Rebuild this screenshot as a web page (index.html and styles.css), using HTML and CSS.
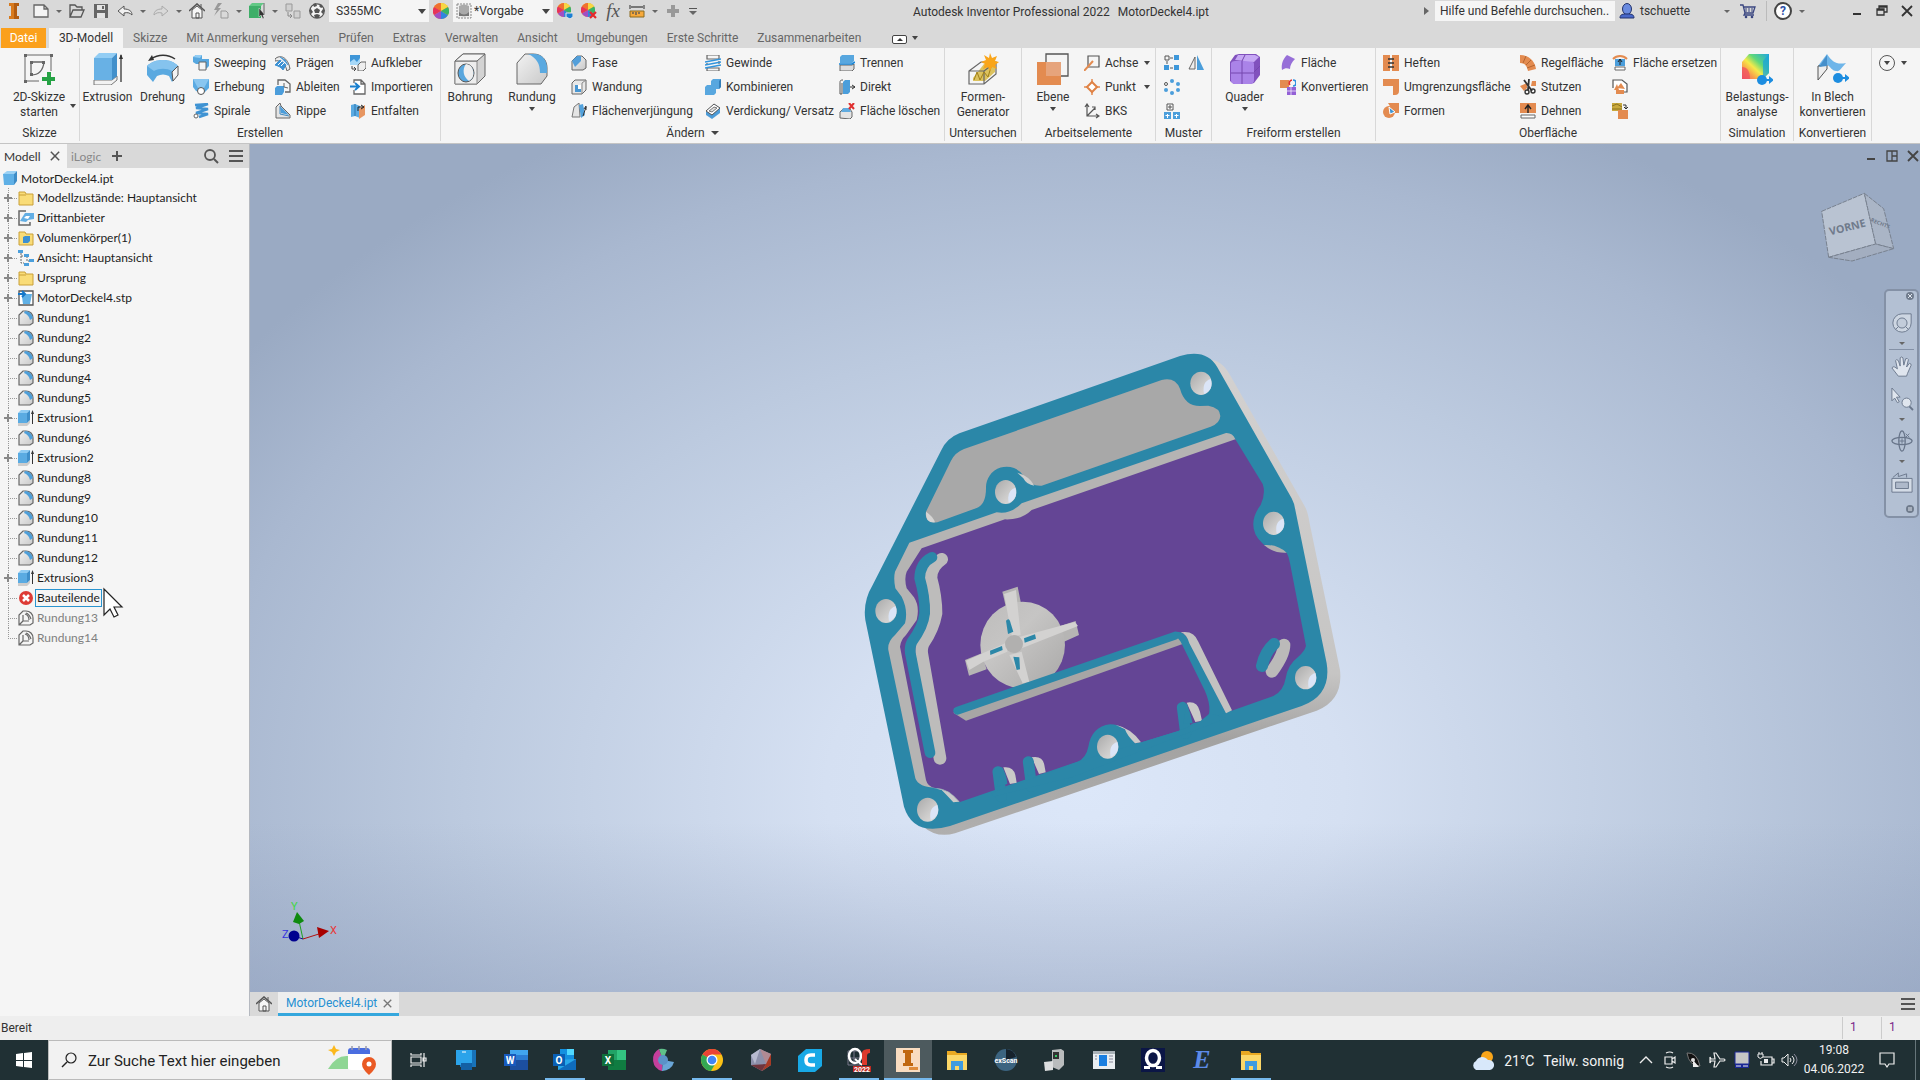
FILE: index.html
```html
<!DOCTYPE html>
<html lang="de">
<head>
    <meta charset="UTF-8">
    <meta name="viewport" content="width=device-width, initial-scale=1.0">
    <title>Autodesk Inventor Professional 2022 - MotorDeckel4.ipt</title>
    <link rel="stylesheet" href="styles.css">
</head>
<body>
    <!-- Icon-Bibliothek -->
    <svg class="defs" width="0" height="0" aria-hidden="true">
        <defs>
            <linearGradient id="g-blue" x1="0" y1="0" x2="1" y2="1"><stop offset="0" stop-color="#7cc0ee"/><stop offset="1" stop-color="#4f9fd8"/></linearGradient>
            <linearGradient id="g-grey" x1="0" y1="0" x2="1" y2="1"><stop offset="0" stop-color="#f2f2f2"/><stop offset="1" stop-color="#c9c9c9"/></linearGradient>
            <linearGradient id="g-hole" x1="0" y1="0" x2="1" y2="1"><stop offset="0" stop-color="#a9a9a9"/><stop offset="0.6" stop-color="#cdcccb"/><stop offset="1" stop-color="#e2e1e0"/></linearGradient>
            <linearGradient id="g-rotor" x1="0" y1="0" x2="1" y2="1"><stop offset="0" stop-color="#bdbcbb"/><stop offset="0.4" stop-color="#c6c5c4"/><stop offset="1" stop-color="#a9a8a7"/></linearGradient>
            <linearGradient id="g-side" x1="0" y1="0" x2="0" y2="1"><stop offset="0" stop-color="#d3d1d0"/><stop offset="0.66" stop-color="#c6c5c4"/><stop offset="0.8" stop-color="#a3a2a1"/><stop offset="1" stop-color="#b0afae"/></linearGradient>
            <linearGradient id="g-rainbow" x1="0" y1="1" x2="1" y2="0"><stop offset="0" stop-color="#f0556a"/><stop offset="0.25" stop-color="#f9a04b"/><stop offset="0.45" stop-color="#f6ea4a"/><stop offset="0.65" stop-color="#5fd87a"/><stop offset="1" stop-color="#1fa6e0"/></linearGradient>
        </defs>

        <symbol id="i-fillet" viewBox="0 0 16 16"><path d="M1 15V5L5 1h3c4 0 7 3 7 7v5l-3 2z" fill="url(#g-grey)" stroke="#666" stroke-width="1.2"/><path d="M7 1c4 0 7 3 8 7l-3 2C11 6 9 4 6 3z" fill="#4f9fd8"/></symbol>
        <symbol id="i-fillet-off" viewBox="0 0 16 16"><path d="M1 15V5l4-4h3c4 0 7 3 7 7v5l-3 2zM5 5v6h6M5 11l-4 4M8 3c3 1 4 3 5 6M7 4c3 1 4 3 4 6" fill="none" stroke="#666" stroke-width="1.2"/></symbol>
        <symbol id="i-extrude" viewBox="0 0 16 16"><path d="M0 13l9 0 3-3v3l-3 3H0z" fill="#ccc"/><path d="M0 3l3-3h9L9 3z" fill="#8ecbf3"/><path d="M0 3h9v10H0z" fill="#5aabe2"/><path d="M9 3l3-3v10l-3 3z" fill="#3f8fca"/><path d="M14.500 2v12" stroke="#333"/><path d="M13 4l1.500-4L16 4z" fill="#333"/></symbol>
        <symbol id="i-folder" viewBox="0 0 16 16"><path d="M1 2h6l1 2h7v11H1z" fill="#f9dc78" stroke="#c9a038"/><path d="M1 5h7" stroke="#c9a038"/></symbol>
        <symbol id="i-cube" viewBox="0 0 16 16"><path d="M1 4l4-3h10l-3 3z" fill="#9bd1f4"/><path d="M1 4h11v11H2z" fill="#5fb0e6"/><path d="M12 4l3-3v10l-3 4z" fill="#3d8cc7"/></symbol>
        <symbol id="i-third" viewBox="0 0 16 16"><path d="M8 1H1v14h11v-3" fill="none" stroke="#666" stroke-width="1.500"/><path d="M2 11l5-8h9v6l-6 1-2 2z" fill="#62aee4"/><path d="M6 8l2-2h4l-2 3z" fill="#fff"/></symbol>
        <symbol id="i-solids" viewBox="0 0 16 16"><path d="M1 2h6l1 2h7v11H1z" fill="#f9dc78" stroke="#c9a038"/><path d="M5 7l2-1h5v5l-2 2H5z" fill="#3c90d2"/></symbol>
        <symbol id="i-viewrep" viewBox="0 0 16 16"><path d="M3 3v10h3M3 6h6v5h3" fill="none" stroke="#666" stroke-dasharray="2 1"/><path d="M0 0h5v3H0zM6 4h5v3H6zM11 9h5v3h-5zM6 13h5v3H6z" fill="#4b9fdc"/></symbol>
        <symbol id="i-stp" viewBox="0 0 16 16"><path d="M1 1h14v14H1z" fill="#fff" stroke="#555" stroke-width="1.300"/><path d="M4 7l3-3h7l-2 10H5z" fill="#5fb0e6"/><path d="M0 4h6M4 1l3 3-3 3" fill="none" stroke="#1477c9" stroke-width="2"/></symbol>
        <symbol id="i-eop" viewBox="0 0 16 16"><circle cx="8" cy="8" r="7" fill="#dd3b35"/><path d="M5 5l6 6M11 5l-6 6" stroke="#fff" stroke-width="2.500"/></symbol>

        <symbol id="b-sketch" viewBox="0 0 32 32"><path d="M2 2h26M2 2v26M2 28h14M28 2v16" stroke="#666" fill="none"/><path d="M8 9h13M8 9v13M8 22c8 0 12-4 13-13" stroke="#666" stroke-width="1.300" fill="none"/><path d="M1 1h3v3H1zM27 1h3v3h-3zM1 27h3v3H1zM7 8h3v3H7zM19 8h3v3h-3zM7 20h3v3H7z" fill="#666"/><path d="M24 19h4v5h5v4h-5v5h-4v-5h-5v-4h5z" fill="#25a244"/></symbol>
        <symbol id="b-extrude" viewBox="0 0 32 32"><path d="M2 27h18l5-4v4l-6 5H2z" fill="#f2f2f2" stroke="#777"/><path d="M2 5l5-5h18l-5 5z" fill="#92cdf4"/><path d="M2 5h18v22H2z" fill="#68b1e5"/><path d="M20 5l5-5v23l-5 4z" fill="#4290cb"/><path d="M29 2v27" stroke="#333" stroke-width="1.300"/><path d="M27 6l2-5 2 5z" fill="#333"/></symbol>
        <symbol id="b-revolve" viewBox="0 0 32 32"><path d="M0 13c8-8 24-8 31 0v9l-6 7-3-6c-4-2-8-2-12 0l-4 6-6-7z" fill="#5aa9e0"/><path d="M0 13c8-8 24-8 31 0l-6 5c-5-3-13-3-18 0z" fill="#85c3ee"/><path d="M31 13v9l-5 6-1-9z" fill="#f2f2f2" stroke="#555"/><path d="M4 6c7-5 17-5 24 0" fill="none" stroke="#333" stroke-width="1.500"/><path d="M1 8l4-6 2 5z" fill="#333"/></symbol>
        <symbol id="b-hole" viewBox="0 0 32 32"><path d="M1 8l8-7h22v22l-8 8H1z" fill="#d3d3d3" stroke="#666"/><path d="M1 8h22v23H1z" fill="#ededed" stroke="#888"/><path d="M1 8l8-7h22l-8 7z" fill="#f4f4f4" stroke="#666"/><ellipse cx="12" cy="20" rx="8" ry="9" fill="#58a6dd" stroke="#555"/><path d="M12 11a8 9 0 0 1 3 17c-6-4-7-12-3-17z" fill="#eee"/></symbol>
        <symbol id="b-fillet" viewBox="0 0 32 32"><path d="M1 31V10l8-9h8c9 0 14 6 14 14v8l-6 8z" fill="url(#g-grey)" stroke="#666"/><path d="M12 1h6c8 0 13 6 13 14v5h-7c0-9-3-15-12-19z" fill="#5aa9e0"/></symbol>
        <symbol id="b-shape" viewBox="0 0 32 32"><path d="M6 25l11-14h11v8L18 28H6z" fill="#dcc25e"/><path d="M2 18l12-9h15v12L17 31H2zM2 18h15v13M17 18l12-9" fill="none" stroke="#666" stroke-width="1.200"/><path d="M7 27l3-8 3 8 4-8 4 5 3-10" fill="none" stroke="#a08018"/><path d="M23 0l2 5 5-2-2 5 4 1-4 3 2 4-5-2-2 4-2-4-5 2 2-5-4-2 5-2-2-5 5 3z" fill="#f9a51a"/></symbol>
        <symbol id="b-plane" viewBox="0 0 32 32"><path d="M9 1h22v22H9z" fill="none" stroke="#555" stroke-width="1.300"/><path d="M0 9h24v23H0z" fill="#e38b50"/><path d="M9 9h15v14H9z" fill="#e6a47c"/></symbol>
        <symbol id="b-box" viewBox="0 0 32 32"><path d="M1 9l5-7 4-1h17l4 3v18l-6 8-4 1H5l-4-3z" fill="#8151bd"/><path d="M2 10q1-2 4-2h15q4 0 4 3v16q0 4-4 4H6q-4 0-4-4z" fill="#aa83e8"/><path d="M6 7l3-5h17l4 2-5 5z" fill="#c6a8f4"/><path d="M13 8v23M2 20h23M13 8l3-6M25 19l6-6" stroke="#7546ae" fill="none"/></symbol>
        <symbol id="b-stress" viewBox="0 0 32 32"><path d="M1 9l7-8h20v19l-6 6H1z" fill="url(#g-rainbow)"/><path d="M22 8l6-7v19l-6 6z" fill="#19a2dc" opacity=".7"/><path d="M1 14q8 0 8 12H1z" fill="#ef4c63" opacity=".7"/><circle cx="21" cy="27" r="5" fill="#1c8de0"/><path d="M24 26h4v-3l5 4-5 4v-3h-4z" fill="#1c8de0"/></symbol>
        <symbol id="b-sheet" viewBox="0 0 32 32"><path d="M1 13l9-12c5 8 10 11 19 9-5 5-6 9-10 8-4 0-6-5-9-6z" fill="#6eb5e9"/><path d="M1 13v14l9-11v-4z" fill="#eee" stroke="#555"/><path d="M2 14l8-12v11z" fill="#468fca"/><circle cx="21" cy="25" r="5" fill="#1c8de0"/><path d="M24 24h4v-3l5 4-5 4v-3h-4z" fill="#1c8de0"/></symbol>

        <symbol id="s-sweep" viewBox="0 0 16 16"><path d="M0 2l3-2h6v4h7v7l-3 3H8V9H3L0 7z" fill="#57a7df"/><path d="M6 7h7v8H6z" fill="#f5f5f5" stroke="#666"/><path d="M0 2l3-2h6L7 3z" fill="#93cdf4"/></symbol>
        <symbol id="s-loft" viewBox="0 0 16 16"><path d="M0 0h16v9l-5 5-8-2-3-4z" fill="#5aaae2"/><path d="M0 0h16l-5 9H5z" fill="#89c6f0"/><circle cx="8" cy="12" r="3.500" fill="#fff" stroke="#555"/></symbol>
        <symbol id="s-coil" viewBox="0 0 16 16"><path d="M2 2l13-1-12 4 12 1-12 4 12 1-9 3" fill="none" stroke="#3f93d3" stroke-width="2.400"/><circle cx="3" cy="13" r="2" fill="#fff" stroke="#666"/></symbol>
        <symbol id="s-emboss" viewBox="0 0 16 16"><path d="M0 4C5-1 13 2 15 14l-3 2C10 7 5 5 0 6z" fill="#eee" stroke="#666"/><path d="M0 10l5-5 6 5-3 5c-2-3-5-4-8-5zM5 2l5 3 3 5" fill="#3d92d4" stroke="#3d92d4"/><path d="M3 10l4-4M6 11l4-4" stroke="#fff"/></symbol>
        <symbol id="s-derive" viewBox="0 0 16 16"><path d="M3 6V1h7l5 4v8h-5" fill="none" stroke="#666" stroke-width="1.300"/><path d="M0 9l2-2h7v6l-2 3H0z" fill="#4b9ddb"/><path d="M9 4v4l4 1" fill="none" stroke="#666"/></symbol>
        <symbol id="s-rib" viewBox="0 0 16 16"><path d="M1 15V4l4-4 1 3 9 9v3z" fill="#e4e4e4" stroke="#666"/><path d="M5 3l1 7 8 2z" fill="#4b9ddb"/><path d="M5 3v8l9 2" fill="none" stroke="#3f88c0"/></symbol>
        <symbol id="s-decal" viewBox="0 0 16 16"><path d="M0 0h10v10H0z" fill="#3f96d8"/><path d="M0 7l4-3 3 3 3-4v7H0z" fill="#a6d8f8"/><path d="M8 10l3-3h5v6l-3 3H8z" fill="#eee" stroke="#666"/><path d="M2 11v3h4M4 12l2 2-2 2" fill="none" stroke="#444"/></symbol>
        <symbol id="s-import" viewBox="0 0 16 16"><path d="M4 4V1h7l4 4v10H4v-4M11 1v4h4" fill="#fff" stroke="#666" stroke-width="1.300"/><path d="M0 7.500h8M5 4l4 3.500L5 11" fill="none" stroke="#1b80cf" stroke-width="2"/></symbol>
        <symbol id="s-unwrap" viewBox="0 0 16 16"><path d="M1 2l4-1 5 2v12l-5-2-4 1z" fill="#5aaae2"/><path d="M5 1v12" stroke="#2f78b0"/><path d="M9 6l6-4v10l-6 4z" fill="#e79661"/><path d="M8 8V4h5M11 2l3 2-3 2" fill="none" stroke="#222"/></symbol>
        <symbol id="s-chamfer" viewBox="0 0 16 16"><path d="M1 15V6l5-5h5l4 4v8l-3 2z" fill="url(#g-grey)" stroke="#666"/><path d="M1 6l5-5h4v5l-6 6z" fill="#539fda"/></symbol>
        <symbol id="s-shell" viewBox="0 0 16 16"><path d="M1 4l3-3h11v10l-4 4H1z" fill="#e8e8e8" stroke="#666"/><path d="M4 6h6v7H4z" fill="#4a97d2"/><path d="M7 6h3v4H7z" fill="#fff"/><path d="M11 4v11M11 4l4-3" stroke="#888"/></symbol>
        <symbol id="s-draft" viewBox="0 0 16 16"><path d="M1 14L3 4l5-4 1 14z" fill="#e4e4e4" stroke="#777"/><path d="M8 2l4-1 2 11-4 3z" fill="#53a2dc"/><path d="M12 13l3-9M13 6l2-3v4" stroke="#333" fill="none"/></symbol>
        <symbol id="s-thread" viewBox="0 0 16 16"><path d="M2 0h12v4H2zM2 13h12v3H2zM2 8v2M14 6v3" fill="none" stroke="#666" stroke-width="1.200"/><path d="M0 7l16-3M0 10l16-3M0 13l16-3" stroke="#3294dc" stroke-width="1.700"/></symbol>
        <symbol id="s-combine" viewBox="0 0 16 16"><path d="M6 2l2-2h8v8l-2 2h-3v4l-2 2H0V8l2-2h4z" fill="#58a7df"/><path d="M14 2l2-2v8l-2 2z" fill="#347fb9"/></symbol>
        <symbol id="s-thicken" viewBox="0 0 16 16"><path d="M1 9l8-8 6 4v5l-8 6-6-4z" fill="#4d9cd8"/><path d="M1 8l8-7 6 4-8 7z" fill="#fff" stroke="#555"/><path d="M4 8l5-4 3 1-5 4z" fill="#ddd" stroke="#777"/></symbol>
        <symbol id="s-split" viewBox="0 0 16 16"><path d="M1 2l2-2h12v6l-2 2H1z" fill="#58a7df"/><path d="M1 10h12l2-1v5l-2 2H1z" fill="#ddd" stroke="#666"/><path d="M0 9h13l3-2" fill="none" stroke="#1a87d8" stroke-width="1.600"/></symbol>
        <symbol id="s-direct" viewBox="0 0 16 16"><path d="M4 1C1 1 1 2 1 4v11h2V4" fill="none" stroke="#555"/><path d="M4 3l2-2h5v12l-2 2H4z" fill="#4b9edb"/><path d="M11 8h5M13 6l3 2-3 2" fill="none" stroke="#333"/></symbol>
        <symbol id="s-delface" viewBox="0 0 16 16"><path d="M1 15V9l3-3h7l2 3v5l-2 2z" fill="#e4e4e4" stroke="#666"/><path d="M2 9l2-4h6l2 4z" fill="#61abdf"/><path d="M10 0l5 6M15 0l-5 6" stroke="#e03030" stroke-width="2"/></symbol>
        <symbol id="s-axis" viewBox="0 0 16 16"><path d="M4 1h11v11H4z" fill="none" stroke="#555" stroke-width="1.200"/><path d="M0 16L9 6" stroke="#e38b50" stroke-width="2"/></symbol>
        <symbol id="s-point" viewBox="0 0 16 16"><path d="M8 0v16M0 8h16" stroke="#e38b50" stroke-width="1.500"/><path d="M8 3l5 5-5 5-5-5z" fill="#fff" stroke="#df8245" stroke-width="2"/></symbol>
        <symbol id="s-ucs" viewBox="0 0 16 16"><path d="M3 2v11h11M3 13l8-8M1 4l2-3 2 3M12 11l3 2-3 2M8 4h3v3" fill="none" stroke="#555" stroke-width="1.200"/></symbol>
        <symbol id="s-rect" viewBox="0 0 16 16"><path d="M1 1h4v4H1z" fill="none" stroke="#555"/><path d="M10 0h5v5h-5zM0 10h5v5H0zM10 10h5v5h-5z" fill="#3f98da"/><path d="M6 3h3M6 13h3M3 6v3" stroke="#555"/></symbol>
        <symbol id="s-circ" viewBox="0 0 16 16"><circle cx="8" cy="2" r="2" fill="#4b9edb"/><circle cx="2" cy="5" r="1.500" fill="none" stroke="#555"/><circle cx="14" cy="5" r="2" fill="#4b9edb"/><circle cx="2" cy="11" r="2" fill="#4b9edb"/><circle cx="14" cy="11" r="2" fill="#4b9edb"/><circle cx="8" cy="14" r="2" fill="#4b9edb"/></symbol>
        <symbol id="s-skpat" viewBox="0 0 16 16"><path d="M3 1h6v6H3zM6 2v4M4 4h4" fill="#fff" stroke="#555"/><path d="M0 9h7v7H0zM9 9h7v7H9z" fill="#4b9edb"/><path d="M3.500 11v4M1.500 12.500h4M12.500 11v4M10.500 12.500h4" stroke="#fff"/></symbol>
        <symbol id="s-mirror" viewBox="0 0 16 16"><path d="M7 2v12H1z" fill="#eee" stroke="#666"/><path d="M9 0v15h7z" fill="#4b9edb"/></symbol>
        <symbol id="s-face" viewBox="0 0 16 16"><path d="M2 15C1 9 3 4 7 0l8 4c-3 3-5 6-5 10-3-1-5-1-8 1z" fill="#976fd8"/></symbol>
        <symbol id="s-fconv" viewBox="0 0 16 16"><path d="M0 1h9v8H0z" fill="#e38b50"/><path d="M7 8h9v8H7z" fill="#9360d6"/><path d="M11 8v8M7 12h9" stroke="#fff" stroke-width=".7"/><path d="M10 6a3 3 0 0 1 2-5" fill="none" stroke="#e03030" stroke-width="1.600"/><path d="M13 1a3 3 0 0 1 0 6" fill="none" stroke="#2f8fe0" stroke-width="1.600"/></symbol>
        <symbol id="s-stitch" viewBox="0 0 16 16"><path d="M0 0h7v16H0zM9 0h7v16H9z" fill="#e38b50"/><path d="M5 4h6M5 8h6M5 12h6" stroke="#333" stroke-width="1.400"/></symbol>
        <symbol id="s-patch" viewBox="0 0 16 16"><path d="M0 0h16v12q0 4-4 4h-2V7H0z" fill="#e38b50"/></symbol>
        <symbol id="s-sculpt" viewBox="0 0 16 16"><path d="M5 0h11v10h-5z" fill="#e38b50"/><circle cx="6" cy="9" r="6" fill="#e38b50"/><path d="M6 4l6 5-5 2z" fill="#3d95d6" stroke="#fff"/></symbol>
        <symbol id="s-ruled" viewBox="0 0 16 16"><path d="M0 0c9 0 15 6 16 14l-8 2c-1-5-3-8-8-8z" fill="#e38b50"/><path d="M6 1L3 8M11 5l-5 5M15 10l-8 3" stroke="#a85c28" stroke-width=".8"/></symbol>
        <symbol id="s-trim" viewBox="0 0 16 16"><path d="M0 7l7-3v5l-3 3zM12 2h4v5h-5z" fill="#e38b50"/><path d="M4 1l8 11M9 0L8 11" stroke="#333" stroke-width="1.800"/><circle cx="7" cy="13" r="2" fill="none" stroke="#333" stroke-width="1.400"/><circle cx="13" cy="12" r="2" fill="none" stroke="#333" stroke-width="1.400"/></symbol>
        <symbol id="s-extend" viewBox="0 0 16 16"><path d="M0 0h16v10H0z" fill="#e38b50"/><path d="M1 12h14v3H1z" fill="#fff" stroke="#666"/><path d="M8 10V3M5 6l3-4 3 4" fill="none" stroke="#222" stroke-width="1.400"/></symbol>
        <symbol id="s-replace" viewBox="0 0 16 16"><path d="M1 4c4-4 10-4 14 0" fill="none" stroke="#e38b50" stroke-width="2"/><path d="M3 4h10v7H3z" fill="#4b9edb"/><path d="M3 12h10v3H3z" fill="#fff" stroke="#666"/><path d="M8 10V4M6 7l2-3 2 3" fill="none" stroke="#222"/></symbol>
        <symbol id="s-repair" viewBox="0 0 16 16"><path d="M1 9V1h9l5 4v8h-4" fill="#fff" stroke="#555" stroke-width="1.200"/><path d="M2 11l3-6 2 6zM5 9l4-5 4 6zM4 11h8v4H4z" fill="#e38b50"/></symbol>
        <symbol id="s-fitmesh" viewBox="0 0 16 16"><path d="M0 0h10v8H0z" fill="#c9a93d"/><path d="M0 3l5-2 5 3M0 6h10" stroke="#8d7420" fill="none"/><path d="M6 7h10v9H6z" fill="#e38b50"/><path d="M11 2h3v4M12 4l2 2 2-2" fill="none" stroke="#333"/></symbol>

        <symbol id="q-new" viewBox="0 0 16 16"><path d="M1 2h10l4 4v8H1zM11 2v4h4" fill="#f4f4f4" stroke="#666" stroke-width="1.300"/></symbol>
        <symbol id="q-open" viewBox="0 0 16 16"><path d="M1 14V2h5l2 2h5v3M1 14l3-7h11l-3 7z" fill="none" stroke="#555" stroke-width="1.300"/></symbol>
        <symbol id="q-save" viewBox="0 0 16 16"><path d="M1 1h14v14H1z" fill="#666"/><path d="M4 2h8v5H4zM4 10h8v5H4z" fill="#e4e4e4"/><path d="M9 3h2v3H9z" fill="#666"/></symbol>
        <symbol id="q-undo" viewBox="0 0 16 16"><path d="M1 8l6-5v3c5 0 8 2 8 6-2-2-4-3-8-2v3z" fill="#f1f1f1" stroke="#555"/></symbol>
        <symbol id="q-redo" viewBox="0 0 16 16"><path d="M15 8L9 3v3c-5 0-8 2-8 6 2-2 4-3 8-2v3z" fill="none" stroke="#aaa"/></symbol>
        <symbol id="q-home" viewBox="0 0 16 16"><path d="M0 8l8-7 8 7" fill="none" stroke="#555" stroke-width="1.600"/><path d="M3 7v8h10V7L8 3z" fill="#f6f6f6" stroke="#555"/><path d="M7 10h3v5H7zM12 1v3" fill="none" stroke="#555"/></symbol>
        <symbol id="q-bolt" viewBox="0 0 16 16"><path d="M5 0L1 7h3l-3 6 7-8H5l4-5z" fill="#999"/><path d="M8 8h5l2 2v5H8z" fill="none" stroke="#999"/></symbol>
        <symbol id="q-select" viewBox="0 0 16 16"><path d="M4 0h11v12" fill="none" stroke="#666"/><path d="M0 3h12v12H0z" fill="#3eae68"/><path d="M0 3l3-3h12l-3 3z" fill="#62c885"/><path d="M10 5v9l2-2 2 4 1-1-1-3h2z" fill="#333" stroke="#fff" stroke-width=".4"/></symbol>
        <symbol id="q-link" viewBox="0 0 16 16"><path d="M1 1h6v7H1zM9 8h6v7H9z" fill="#d0d0d0" stroke="#999"/><path d="M3 9v4h4M5 11l2 2-2 2" fill="none" stroke="#888"/></symbol>
        <symbol id="q-ball" viewBox="0 0 16 16"><circle cx="8" cy="8" r="7.200" fill="#f4f4f4" stroke="#555" stroke-width="1.300"/><path d="M8 5l3 2-1 3H6L5 7zM4 1l3-1 1 3-3 1zM12 1l2 3-2 1-2-2zM0 7l2-1 2 3-2 2zM16 7l-2-1-2 3 2 2zM5 12l3-1 3 1-1 3H6z" fill="#555"/></symbol>
        <symbol id="q-wheel" viewBox="0 0 16 16"><circle cx="8" cy="8" r="8" fill="#f59c2d"/><path d="M8 8V0a8 8 0 0 1 7 4z" fill="#f6d743"/><path d="M8 8L1 4a8 8 0 0 1 7-4z" fill="#ef7130"/><path d="M8 8L1 12a8 8 0 0 1 0-8z" fill="#e7335a"/><path d="M8 8v8a8 8 0 0 1-7-4z" fill="#a04fc4"/><path d="M8 8l7 4a8 8 0 0 1-7 4z" fill="#2f86dd"/><path d="M8 8l7-4a8 8 0 0 1 0 8z" fill="#37b467"/></symbol>
        <symbol id="q-wheel-add" viewBox="0 0 16 16"><use href="#q-wheel" width="14" height="14"/><path d="M9 10h7v4l-3 2-4-2z" fill="#1c7fd4" stroke="#e8e8e8"/></symbol>
        <symbol id="q-wheel-del" viewBox="0 0 16 16"><use href="#q-wheel" width="14" height="14"/><path d="M9 9l6 6M15 9l-6 6" stroke="#e52a2a" stroke-width="2.200"/></symbol>
        <symbol id="q-measure" viewBox="0 0 16 16"><path d="M1 8h14v6H1z" fill="#f7a93b" stroke="#8a6a20"/><path d="M4 9v2M7 9v3M10 9v2M1 2v4M15 2v4M2 4h12" stroke="#555" stroke-width="1.300"/></symbol>
        <symbol id="q-swatch" viewBox="0 0 16 16"><path d="M1 1h14v14H1z" fill="#eee" stroke="#888" stroke-dasharray="2 1"/><path d="M3 3q5-3 10 0v8q-5 5-10 0z" fill="#aaa"/><path d="M3 9q5 5 10 0v4H3z" fill="#777"/></symbol>
        <symbol id="q-plus" viewBox="0 0 16 16"><path d="M6 2h4v4h4v4h-4v4H6v-4H2V6h4z" fill="#999"/></symbol>
        <symbol id="q-user" viewBox="0 0 16 16"><ellipse cx="8" cy="6" rx="4.500" ry="5.500" fill="#6a8be0" stroke="#24346e"/><path d="M1 15c0-4 3-4 7-4s7 0 7 4z" fill="#4767c9" stroke="#24346e"/></symbol>
        <symbol id="q-cart" viewBox="0 0 16 16"><path d="M0 2h3l2 8h8l2-6H4M5 10l-1 2h10" fill="none" stroke="#3a4680" stroke-width="1.300"/><path d="M6 5v4M9 5v4M12 5v4" stroke="#3a4680"/><circle cx="6" cy="14" r="1.300" fill="#3a4680"/><circle cx="12" cy="14" r="1.300" fill="#3a4680"/></symbol>
        <symbol id="w-min" viewBox="0 0 12 12"><path d="M2 9h8" stroke="currentColor" stroke-width="2"/></symbol>
        <symbol id="w-restore" viewBox="0 0 12 12"><path d="M3 4V1h8v6H8M1 4h7v6H1zM1 5h7M3 2h8" fill="none" stroke="currentColor" stroke-width="1.300"/></symbol>
        <symbol id="w-tile" viewBox="0 0 12 12"><path d="M1 1h10v10H1zM6 1v10M6 6h5" fill="none" stroke="currentColor" stroke-width="1.300"/></symbol>
        <symbol id="w-close" viewBox="0 0 12 12"><path d="M1 1l10 10M11 1L1 11" stroke="currentColor" stroke-width="1.800"/></symbol>
        <symbol id="w-menu" viewBox="0 0 16 16"><path d="M1 3h14M1 8h14M1 13h14" stroke="#555" stroke-width="2"/></symbol>
        <symbol id="w-search" viewBox="0 0 16 16"><circle cx="7" cy="7" r="5" fill="none" stroke="currentColor" stroke-width="1.800"/><path d="M11 11l4 4" stroke="currentColor" stroke-width="2"/></symbol>
        <symbol id="w-plus" viewBox="0 0 10 10"><path d="M5 0v10M0 5h10" stroke="currentColor" stroke-width="2"/></symbol>

        <symbol id="t-explorer" viewBox="0 0 24 24"><path d="M2 3h8l2 2h10v17H2z" fill="#e9a922"/><path d="M2 7h20v15H2z" fill="#fbd768"/><path d="M6 13h12v9h-4v-4h-4v4H6z" fill="#3f9be0"/></symbol>
    </svg>

    <div class="app">
        <header class="titlebar">
            <div class="quick-access">
                <svg class="logo" viewBox="0 0 16 16"><path d="M3 0h10v3h-2v10h2v3H3v-3h2V3H3z" fill="#d87a1d"/><path d="M8 0h5v3h-2v10h2v3H8z" fill="#b35c10"/></svg>
                <button class="qa" aria-label="Neu"><svg><use href="#q-new"/></svg></button>
                <button class="drop" aria-label="Mehr"></button>
                <button class="qa" aria-label="Öffnen"><svg><use href="#q-open"/></svg></button>
                <button class="qa" aria-label="Speichern"><svg><use href="#q-save"/></svg></button>
                <button class="qa" aria-label="Rückgängig"><svg><use href="#q-undo"/></svg></button>
                <button class="drop" aria-label="Mehr"></button>
                <button class="qa" aria-label="Wiederherstellen"><svg><use href="#q-redo"/></svg></button>
                <button class="drop" aria-label="Mehr"></button>
                <button class="qa" aria-label="Startseite"><svg><use href="#q-home"/></svg></button>
                <button class="qa" aria-label="Aktualisieren"><svg><use href="#q-bolt"/></svg></button>
                <button class="drop" aria-label="Mehr"></button>
                <button class="qa" aria-label="Auswahl"><svg><use href="#q-select"/></svg></button>
                <button class="drop" aria-label="Mehr"></button>
                <button class="qa" aria-label="Verknüpfung"><svg><use href="#q-link"/></svg></button>
                <button class="qa" aria-label="Material"><svg><use href="#q-ball"/></svg></button>
                <label class="combo"><select aria-label="Material"><option>S355MC</option></select></label>
                <button class="qa" aria-label="Darstellung"><svg><use href="#q-wheel"/></svg></button>
                <label class="combo swatch"><svg><use href="#q-swatch"/></svg><select aria-label="Darstellung"><option>*Vorgabe</option></select></label>
                <button class="qa" aria-label="Anpassen"><svg><use href="#q-wheel-add"/></svg></button>
                <button class="qa" aria-label="Löschen"><svg><use href="#q-wheel-del"/></svg></button>
                <button class="qa fx" aria-label="Parameter">fx</button>
                <button class="qa" aria-label="Messen"><svg><use href="#q-measure"/></svg></button>
                <button class="drop" aria-label="Mehr"></button>
                <button class="qa" aria-label="Hinzufügen"><svg><use href="#q-plus"/></svg></button>
                <button class="drop line" aria-label="Anpassen"></button>
            </div>
            <div class="app-title"><span>Autodesk Inventor Professional 2022</span><span>MotorDeckel4.ipt</span></div>
            <div class="infocenter">
                <span class="play"></span>
                <input type="text" aria-label="Hilfe" value="Hilfe und Befehle durchsuchen..">
                <button class="user"><svg><use href="#q-user"/></svg>tschuette</button>
                <button class="drop" aria-label="Mehr"></button>
                <button class="qa cart" aria-label="App Store"><svg><use href="#q-cart"/></svg></button>
                <button class="help" aria-label="Hilfe">?</button>
                <button class="drop" aria-label="Mehr"></button>
            </div>
            <div class="window-buttons">
                <button aria-label="Minimieren"><svg><use href="#w-min"/></svg></button>
                <button aria-label="Wiederherstellen"><svg><use href="#w-restore"/></svg></button>
                <button aria-label="Schließen"><svg><use href="#w-close"/></svg></button>
            </div>
        </header>

        <nav class="ribbon-tabs">
            <a href="#" class="file">Datei</a>
            <a href="#" class="active">3D-Modell</a>
            <a href="#">Skizze</a>
            <a href="#">Mit Anmerkung versehen</a>
            <a href="#">Prüfen</a>
            <a href="#">Extras</a>
            <a href="#">Verwalten</a>
            <a href="#">Ansicht</a>
            <a href="#">Umgebungen</a>
            <a href="#">Erste Schritte</a>
            <a href="#">Zusammenarbeiten</a>
            <button class="collapse" aria-label="Multifunktionsleiste"><span></span></button>
            <button class="drop" aria-label="Mehr"></button>
        </nav>

        <div class="ribbon">
            <section class="panel p-skizze">
                <div class="tools">
                    <button class="big"><svg><use href="#b-sketch"/></svg>2D-Skizze<br>starten</button>
                    <button class="drop low" aria-label="Mehr"></button>
                </div>
                <h2>Skizze</h2>
            </section>
            <section class="panel p-erstellen">
                <div class="tools">
                    <button class="big"><svg><use href="#b-extrude"/></svg>Extrusion</button>
                    <button class="big"><svg><use href="#b-revolve"/></svg>Drehung</button>
                    <div class="stack w82">
                        <button><svg><use href="#s-sweep"/></svg>Sweeping</button>
                        <button><svg><use href="#s-loft"/></svg>Erhebung</button>
                        <button><svg><use href="#s-coil"/></svg>Spirale</button>
                    </div>
                    <div class="stack w75">
                        <button><svg><use href="#s-emboss"/></svg>Prägen</button>
                        <button><svg><use href="#s-derive"/></svg>Ableiten</button>
                        <button><svg><use href="#s-rib"/></svg>Rippe</button>
                    </div>
                    <div class="stack">
                        <button><svg><use href="#s-decal"/></svg>Aufkleber</button>
                        <button><svg><use href="#s-import"/></svg>Importieren</button>
                        <button><svg><use href="#s-unwrap"/></svg>Entfalten</button>
                    </div>
                </div>
                <h2>Erstellen</h2>
            </section>
            <section class="panel p-aendern">
                <div class="tools">
                    <button class="big"><svg><use href="#b-hole"/></svg>Bohrung</button>
                    <button class="big more"><svg><use href="#b-fillet"/></svg>Rundung</button>
                    <div class="stack w134">
                        <button><svg><use href="#s-chamfer"/></svg>Fase</button>
                        <button><svg><use href="#s-shell"/></svg>Wandung</button>
                        <button><svg><use href="#s-draft"/></svg>Flächenverjüngung</button>
                    </div>
                    <div class="stack w134">
                        <button><svg><use href="#s-thread"/></svg>Gewinde</button>
                        <button><svg><use href="#s-combine"/></svg>Kombinieren</button>
                        <button><svg><use href="#s-thicken"/></svg>Verdickung/ Versatz</button>
                    </div>
                    <div class="stack">
                        <button><svg><use href="#s-split"/></svg>Trennen</button>
                        <button><svg><use href="#s-direct"/></svg>Direkt</button>
                        <button><svg><use href="#s-delface"/></svg>Fläche löschen</button>
                    </div>
                </div>
                <h2>Ändern <span class="caret"></span></h2>
            </section>
            <section class="panel p-untersuchen">
                <div class="tools">
                    <button class="big"><svg><use href="#b-shape"/></svg>Formen-<br>Generator</button>
                </div>
                <h2>Untersuchen</h2>
            </section>
            <section class="panel p-arbeit">
                <div class="tools">
                    <button class="big more"><svg><use href="#b-plane"/></svg>Ebene</button>
                    <div class="stack">
                        <button class="with-drop"><svg><use href="#s-axis"/></svg>Achse</button>
                        <button class="with-drop"><svg><use href="#s-point"/></svg>Punkt</button>
                        <button><svg><use href="#s-ucs"/></svg>BKS</button>
                    </div>
                </div>
                <h2>Arbeitselemente</h2>
            </section>
            <section class="panel p-muster">
                <div class="tools">
                    <div class="stack w24">
                        <button aria-label="Rechteckig"><svg><use href="#s-rect"/></svg></button>
                        <button aria-label="Polar"><svg><use href="#s-circ"/></svg></button>
                        <button aria-label="Skizzenbasiert"><svg><use href="#s-skpat"/></svg></button>
                    </div>
                    <div class="stack">
                        <button aria-label="Spiegeln"><svg><use href="#s-mirror"/></svg></button>
                    </div>
                </div>
                <h2>Muster</h2>
            </section>
            <section class="panel p-freiform">
                <div class="tools">
                    <button class="big more"><svg><use href="#b-box"/></svg>Quader</button>
                    <div class="stack">
                        <button><svg><use href="#s-face"/></svg>Fläche</button>
                        <button><svg><use href="#s-fconv"/></svg>Konvertieren</button>
                    </div>
                </div>
                <h2>Freiform erstellen</h2>
            </section>
            <section class="panel p-oberflaeche">
                <div class="tools">
                    <div class="stack w137">
                        <button><svg><use href="#s-stitch"/></svg>Heften</button>
                        <button><svg><use href="#s-patch"/></svg>Umgrenzungsfläche</button>
                        <button><svg><use href="#s-sculpt"/></svg>Formen</button>
                    </div>
                    <div class="stack w92">
                        <button><svg><use href="#s-ruled"/></svg>Regelfläche</button>
                        <button><svg><use href="#s-trim"/></svg>Stutzen</button>
                        <button><svg><use href="#s-extend"/></svg>Dehnen</button>
                    </div>
                    <div class="stack">
                        <button><svg><use href="#s-replace"/></svg>Fläche ersetzen</button>
                        <button aria-label="Körper reparieren"><svg><use href="#s-repair"/></svg></button>
                        <button aria-label="Netzfläche anpassen"><svg><use href="#s-fitmesh"/></svg></button>
                    </div>
                </div>
                <h2>Oberfläche</h2>
            </section>
            <section class="panel p-simulation">
                <div class="tools">
                    <button class="big"><svg><use href="#b-stress"/></svg>Belastungs-<br>analyse</button>
                </div>
                <h2>Simulation</h2>
            </section>
            <section class="panel p-konvertieren">
                <div class="tools">
                    <button class="big"><svg><use href="#b-sheet"/></svg>In Blech<br>konvertieren</button>
                </div>
                <h2>Konvertieren</h2>
            </section>
            <div class="ribbon-end">
                <button class="round" aria-label="Anpassen"><span class="caret"></span></button>
                <button class="drop" aria-label="Mehr"></button>
            </div>
        </div>

        <main class="workspace">
            <aside class="browser">
                <div class="browser-tabs">
                    <button class="browser-tab active">Modell <svg><use href="#w-close"/></svg></button>
                    <button class="browser-tab">iLogic</button>
                    <button class="add" aria-label="Hinzufügen"><svg><use href="#w-plus"/></svg></button>
                    <span class="spacer"></span>
                    <button class="tool" aria-label="Suchen"><svg><use href="#w-search"/></svg></button>
                    <button class="tool" aria-label="Menü"><svg><use href="#w-menu"/></svg></button>
                </div>
                <div class="tree-root"><svg><use href="#i-cube"/></svg>MotorDeckel4.ipt</div>
                <ul class="tree">
                    <li class="open"><i></i><svg><use href="#i-folder"/></svg><span>Modellzustände: Hauptansicht</span></li>
                    <li class="open"><i></i><svg><use href="#i-third"/></svg><span>Drittanbieter</span></li>
                    <li class="open"><i></i><svg><use href="#i-solids"/></svg><span>Volumenkörper(1)</span></li>
                    <li class="open"><i></i><svg><use href="#i-viewrep"/></svg><span>Ansicht: Hauptansicht</span></li>
                    <li class="open"><i></i><svg><use href="#i-folder"/></svg><span>Ursprung</span></li>
                    <li class="open"><i></i><svg><use href="#i-stp"/></svg><span>MotorDeckel4.stp</span></li>
                    <li><i></i><svg><use href="#i-fillet"/></svg><span>Rundung1</span></li>
                    <li><i></i><svg><use href="#i-fillet"/></svg><span>Rundung2</span></li>
                    <li><i></i><svg><use href="#i-fillet"/></svg><span>Rundung3</span></li>
                    <li><i></i><svg><use href="#i-fillet"/></svg><span>Rundung4</span></li>
                    <li><i></i><svg><use href="#i-fillet"/></svg><span>Rundung5</span></li>
                    <li class="open"><i></i><svg><use href="#i-extrude"/></svg><span>Extrusion1</span></li>
                    <li><i></i><svg><use href="#i-fillet"/></svg><span>Rundung6</span></li>
                    <li class="open"><i></i><svg><use href="#i-extrude"/></svg><span>Extrusion2</span></li>
                    <li><i></i><svg><use href="#i-fillet"/></svg><span>Rundung8</span></li>
                    <li><i></i><svg><use href="#i-fillet"/></svg><span>Rundung9</span></li>
                    <li><i></i><svg><use href="#i-fillet"/></svg><span>Rundung10</span></li>
                    <li><i></i><svg><use href="#i-fillet"/></svg><span>Rundung11</span></li>
                    <li><i></i><svg><use href="#i-fillet"/></svg><span>Rundung12</span></li>
                    <li class="open"><i></i><svg><use href="#i-extrude"/></svg><span>Extrusion3</span></li>
                    <li class="selected"><i></i><svg><use href="#i-eop"/></svg><span>Bauteilende</span>
                        <svg class="cursor" viewBox="0 0 20 30"><path d="M1 1v26l6-6 4 8 4-2-4-8h8z" fill="#fff" stroke="#222" stroke-width="1.200"/></svg>
                    </li>
                    <li class="off"><i></i><svg><use href="#i-fillet-off"/></svg><span>Rundung13</span></li>
                    <li class="off"><i></i><svg><use href="#i-fillet-off"/></svg><span>Rundung14</span></li>
                </ul>
            </aside>

            <div class="document">
                <div class="viewport">
                    <div class="doc-buttons">
                        <button aria-label="Minimieren"><svg><use href="#w-min"/></svg></button>
                        <button aria-label="Anordnen"><svg><use href="#w-tile"/></svg></button>
                        <button aria-label="Schließen"><svg><use href="#w-close"/></svg></button>
                    </div>

                    <!-- Motordeckel -->
                    <svg class="part" viewBox="0 0 1560 1560">
                        <path d="M1105 88Q1145 90 1170 135L1395 530Q1403 545 1408 575L1500 1020Q1510 1110 1430 1142L345 1510Q290 1525 250 1490L400 1300 1300 1000 1300 500z" fill="url(#g-side)"/>
                        <path d="M1020 78Q1100 55 1132 112L1355 505Q1364 522 1366 540L1460 1000Q1475 1095 1385 1128L330 1488Q220 1520 192 1430L76 870Q68 815 98 765L303 362Q320 325 358 310z" fill="#2b87a8"/>
                        <path d="M372 357L965 150Q1005 140 1020 176Q1034 228 1080 228L1105 227Q1141 234 1141 258Q1140 280 1112 290L605 467Q575 470 553 440A62 62 0 0 0 438 475Q438 525 408 535L292 577Q252 580 258 545L333 392Q345 368 372 357z" fill="#a8a8a8"/>
                        <path d="M532 428Q568 438 583 467Q560 465 550 445z" fill="#cfcecd"/><path d="M258 545Q280 560 285 577Q255 580 258 545z" fill="#d6d5d4"/>
                        <!-- Wand -->
                        <path d="M208 638L470 547Q510 555 545 520L1158 309Q1178 308 1186 328L1180 640 560 1300 355 1416Q330 1380 290 1374Q235 1372 226 1345L145 960Q142 935 165 915L195 880Q205 840 185 800L166 775Q160 745 165 725z" fill="#b5b4b3"/>
                        <path d="M245 655L495 568Q545 570 575 540L1186 328L1268 462Q1278 490 1262 525Q1228 570 1246 612Q1270 655 1310 662L1340 668Q1347 680 1350 700L1398 948Q1393 965 1375 980Q1342 1005 1337 1045Q1330 1085 1300 1098L1175 1142 1110 1145Q1100 1170 1078 1175L1060 1180 1015 1203 905 1237 885 1240Q860 1183 810 1183Q755 1190 745 1250Q738 1285 712 1295L360 1416Q320 1370 285 1374Q263 1370 258 1350L180 950Q182 930 198 915L230 870Q240 830 222 802L200 775Q192 745 200 725z" fill="#644595"/>
                        <path d="M826 1184Q875 1195 903 1237L885 1240Q860 1215 855 1198zM280 1374Q325 1375 356 1415L340 1417Q320 1395 305 1380z" fill="#cbcac9"/>
                        <path d="M1246 612Q1270 655 1310 650L1340 668Q1300 640 1280 640z" fill="#2b87a8"/>
                        <path d="M1272 645Q1310 642 1340 668Q1300 670 1272 645z" fill="#b2b1b0"/>
                        <!-- Rippe links -->
                        <path d="M305 688Q272 710 273 745Q288 800 288 850Q280 895 250 940Q242 955 246 975L300 1285" fill="none" stroke="#bdbcbb" stroke-width="38" stroke-linecap="round" stroke-linejoin="round"/>
                        <path d="M276 682Q240 700 239 745Q255 800 254 850Q250 890 216 935Q208 950 211 970L270 1268" fill="none" stroke="#2b87a8" stroke-width="32" stroke-linecap="round" stroke-linejoin="round"/>
                        <!-- Flügelrad -->
                        <path d="M487 785L533 770 547 840 502 850zM660 888L707 873 717 915 672 935zM375 990L425 970 440 1018 387 1037z" fill="#b6b5b4"/>
                        <ellipse cx="548" cy="945" rx="127" ry="130" fill="url(#g-rotor)"/>
                        <path d="M492 792L528 780 542 915 516 920zM535 922L704 876 714 888 545 955zM508 975L545 965 568 1056 548 1060zM378 992L505 935 502 965 430 995 388 1020z" fill="#d3d2d1"/>
                        <path d="M498 872Q508 860 512 880L520 905 504 912zM552 925L585 913 588 926 554 938zM450 962L486 948 488 960 451 975zM520 980L538 982 540 1018 530 1020z" fill="#2b87a8"/>
                        <circle cx="522" cy="942" r="27" fill="#b1b0af"/>
                        <!-- Rippe Mitte -->
                        <path d="M340 1148L1020 912 1028 942 378 1172z" fill="#a7a6a5"/>
                        <path d="M352 1142L1005 917" fill="none" stroke="#2b87a8" stroke-width="24" stroke-linecap="round"/>
                        <path d="M1000 906Q1035 900 1048 935L1158 1148 1108 1165 1108 1130Q1105 1100 1086 1065L1022 935z" fill="#2b87a8"/>
                        <path d="M1022 907Q1062 900 1075 935L1176 1141 1158 1150 1048 940Q1040 912 1022 907z" fill="#c3c2c1"/>
                        <path d="M1332 945Q1332 975 1296 1024" fill="none" stroke="#bbbab9" stroke-width="38" stroke-linecap="round"/>
                        <path d="M1302 942Q1275 965 1266 1008" fill="none" stroke="#2b87a8" stroke-width="36" stroke-linecap="round"/>
                        <!-- Nocken -->
                        <path d="M490 1312Q520 1308 526 1335L530 1358 510 1362zM575 1282Q608 1276 613 1305L617 1327 597 1332zM1040 1118Q1072 1112 1080 1145L1086 1172 1066 1176z" fill="#cac9c8"/>
                        <path d="M474 1325L484 1400M565 1295L575 1370M1027 1132L1037 1210" stroke="#2b87a8" stroke-width="33" stroke-linecap="round"/>
                        <path d="M485 1310Q500 1330 502 1362L470 1370zM575 1282Q584 1300 585 1330L560 1340zM1040 1120Q1052 1150 1058 1180L1030 1180z" fill="#2b87a8"/>
                        <path d="M455 1388L550 1355 720 1293 905 1237 1015 1203 1075 1178 1110 1150 1160 1165 700 1340 460 1400z" fill="#2b87a8"/>
                        <g fill="url(#g-hole)"><ellipse cx="1083" cy="160" rx="32" ry="35"/><ellipse cx="497" cy="486" rx="32" ry="36"/><ellipse cx="1301" cy="580" rx="32" ry="35"/><ellipse cx="138" cy="843" rx="32" ry="36"/><ellipse cx="1397" cy="1043" rx="32" ry="35"/><ellipse cx="803" cy="1250" rx="32" ry="36"/><ellipse cx="263" cy="1439" rx="32" ry="36"/></g>
                        <g fill="#dbe5f7"><path d="M1112 147Q1085 155 1092 192Q1122 180 1112 147z"/><path d="M526 473Q499 481 506 518Q536 506 526 473z"/><path d="M1330 566Q1303 574 1310 611Q1340 599 1330 566z"/><path d="M167 829Q140 837 147 874Q177 862 167 829z"/><path d="M1426 1029Q1399 1037 1406 1074Q1436 1062 1426 1029z"/><path d="M832 1236Q805 1244 812 1281Q842 1269 832 1236z"/><path d="M292 1425Q265 1433 272 1470Q302 1458 292 1425z"/></g>
                    </svg>

                    <svg class="viewcube" viewBox="0 0 220 210">
                        <path d="M4 58L132 4 166 156 25 196z" fill="#b9c3d2" stroke="#78818f" stroke-width="3" stroke-dasharray="14 3"/>
                        <path d="M132 4L190 50 220 170 166 156z" fill="#aab5c6" stroke="#78818f" stroke-width="3" stroke-dasharray="14 3"/>
                        <path d="M25 196L166 156 220 170 95 207z" fill="#a3aec0" stroke="#78818f" stroke-width="3" stroke-dasharray="14 3"/>
                        <text x="30" y="130" transform="rotate(-14 30 130)">VORNE</text>
                        <text x="150" y="88" transform="rotate(22 150 88)" class="side">RECHTS</text>
                    </svg>

                    <div class="navbar">
                        <button class="nav-x" aria-label="Schließen"><svg viewBox="0 0 10 10"><circle cx="5" cy="5" r="4" fill="#6f7b8c"/><path d="M3 3l4 4M7 3L3 7" stroke="#dfe5ee"/></svg></button>
                        <button class="nav" aria-label="Navigationsrad"><svg viewBox="0 0 24 24"><path d="M12 2h10v10A10 10 0 1 1 12 2z" fill="#cdd6e2" stroke="#68758a"/><circle cx="12" cy="12" r="5.500" fill="#c2ccda" stroke="#68758a"/><path d="M5 19l3-3M19 19l-3-3" stroke="#68758a"/></svg></button>
                        <button class="drop" aria-label="Mehr"></button>
                        <hr>
                        <button class="nav" aria-label="Pan"><svg viewBox="0 0 24 24"><path d="M8 22L1 13q1-2 3-1l3 2L5 5q1-2 3 0l2 6V2q2-2 3 0l1 8 2-7q2-1 3 1l-2 8 3-4q2 0 2 2l-4 9-1 3z" fill="#dfe5ee" stroke="#68758a"/></svg></button>
                        <button class="nav" aria-label="Zoom"><svg viewBox="0 0 24 24"><path d="M1 0v14l3-3 3 5 2-1-3-5h4z" fill="#dfe5ee" stroke="#68758a"/><circle cx="17" cy="16" r="5" fill="#dfe5ee" stroke="#68758a"/><path d="M20 20l4 4" stroke="#68758a" stroke-width="2"/></svg></button>
                        <button class="drop" aria-label="Mehr"></button>
                        <button class="nav" aria-label="Orbit"><svg viewBox="0 0 24 24"><ellipse cx="12" cy="12" rx="3.500" ry="11" fill="none" stroke="#68758a" stroke-width="1.400"/><ellipse cx="12" cy="12" rx="11" ry="4" fill="none" stroke="#68758a" stroke-width="1.400"/><path d="M12 9v6M9 12h6M16 4l4 4M20 4l-4 4" stroke="#68758a"/></svg></button>
                        <button class="drop" aria-label="Mehr"></button>
                        <button class="nav" aria-label="Ansicht"><svg viewBox="0 0 24 24"><path d="M1 7h22v15H1z" fill="#d3dbe6" stroke="#68758a"/><path d="M5 11h14v7H5z" fill="#aeb9ca" stroke="#68758a"/><path d="M2 6l6-5v4l9-3v4" fill="none" stroke="#68758a"/></svg></button>
                        <button class="nav-x" aria-label="Optionen"><svg viewBox="0 0 10 10"><circle cx="5" cy="5" r="4" fill="#6f7b8c"/><path d="M3 4h4M3 6h4" stroke="#dfe5ee"/></svg></button>
                    </div>

                    <svg class="triad" viewBox="0 0 60 46">
                        <path d="M23 38L19 20" stroke="#1fa01f"/><path d="M13 21L17 11 24 20 19 23z" fill="#0f8a0f"/>
                        <path d="M23 38L42 32" stroke="#b01010"/><path d="M37 26L49 30 39 37z" fill="#a80000"/>
                        <path d="M23 38L14 35" stroke="#10108a"/><circle cx="14" cy="35" r="5.500" fill="#00008f"/>
                        <text x="11" y="9" fill="#3fd83f">Y</text><text x="50" y="33" fill="#e83838">X</text><text x="2" y="37" fill="#3434e0">Z</text>
                    </svg>
                </div>
                <div class="doc-tabs">
                    <button class="home" aria-label="Startseite"><svg><use href="#q-home"/></svg></button>
                    <a href="#" class="doc-tab">MotorDeckel4.ipt <svg><use href="#w-close"/></svg></a>
                    <span class="spacer"></span>
                    <button class="menu" aria-label="Menü"><svg><use href="#w-menu"/></svg></button>
                </div>
            </div>
        </main>

        <footer class="statusbar">
            <span class="status">Bereit</span>
            <span class="count">1</span>
            <span class="count">1</span>
        </footer>
    </div>

    <div class="taskbar">
        <button class="start" aria-label="Start"><svg viewBox="0 0 16 16"><path d="M0 2l7-1v7H0zM8 1l8-1v8H8zM0 9h7v6l-7-1zM8 9h8v7l-8-1z" fill="#fff"/></svg></button>
        <label class="search">
            <svg viewBox="0 0 16 16"><circle cx="10" cy="6" r="5" fill="none" stroke="#222" stroke-width="1.200"/><path d="M6 10l-5 5" stroke="#222" stroke-width="1.400"/></svg>
            <input type="text" placeholder="Zur Suche Text hier eingeben">
            <svg class="art" viewBox="0 0 48 32"><path d="M6 1l2 4 4 1-4 2-2 4-2-4-4-2 4-1z" fill="#fbb81c"/><path d="M0 25q8-14 20-13v13z" fill="#8fd694"/><rect x="20" y="5" width="22" height="21" rx="3" fill="#fff"/><path d="M20 10V7q0-3 3-3h16q3 0 3 3v3z" fill="#4a6de0"/><path d="M24 2v4M31 2v4M38 2v4" stroke="#99a" stroke-width="1.500"/><path d="M41 31q-7-6-7-11a7 7 0 0 1 14 0q0 5-7 11z" fill="#ea5a24"/><circle cx="41" cy="20" r="2.500" fill="#fff"/></svg>
        </label>
        <div class="apps">
            <button aria-label="Aktive Anwendungen"><svg class="small" viewBox="0 0 16 16"><path d="M1 1v2h10V1M1 5h10v6H1zM1 15v-2h10v2M14 1v14M13 6h3v3h-3z" fill="none" stroke="#eee" stroke-width="1.200"/></svg></button>
            <button aria-label="Smartphone"><svg viewBox="0 0 24 24"><path d="M5 2h16v17H5z" fill="#1872b8"/><path d="M1 2h16v15H1z" fill="#2ba3ea"/><path d="M6 15h11v7H6z" fill="#1360a4"/><path d="M7 4h4" stroke="#fff"/></svg></button>
            <button aria-label="Word"><svg viewBox="0 0 24 24"><path d="M6 2h18v5H6z" fill="#41a5ee"/><path d="M6 7h18v5H6z" fill="#2b7cd3"/><path d="M6 12h18v10H6z" fill="#1c4f9f"/><path d="M0 6h12v12H0z" fill="#185abd"/><text x="6" y="16">W</text></svg></button>
            <button class="running" aria-label="Outlook"><svg viewBox="0 0 24 24"><path d="M7 1h14v12H7z" fill="#1490df"/><path d="M14 1h7v6h-7z" fill="#50d9ff"/><path d="M5 12l18-1v11H5z" fill="#28a8ea"/><path d="M5 22l18-11v11z" fill="#0f6cbd"/><path d="M0 6h12v12H0z" fill="#0a5fb4"/><text x="6" y="16">O</text></svg></button>
            <button aria-label="Excel"><svg viewBox="0 0 24 24"><path d="M6 2h18v10H6z" fill="#33c481"/><path d="M6 2h9v10H6z" fill="#21a366"/><path d="M6 12h18v10H6z" fill="#107c41"/><path d="M0 6h12v12H0z" fill="#0f6f3a"/><text x="6" y="16">X</text></svg></button>
            <button aria-label="Farbkreis"><svg viewBox="0 0 24 24"><path d="M12 12L8 1a12 12 0 0 0 3 22z" fill="#c43f9c"/><path d="M12 12L11 23a12 12 0 0 0 12-9z" fill="#6aa6d8"/><path d="M12 12L8 1q4-1 8 1z" fill="#5fc08a"/><circle cx="12" cy="12" r="5" fill="#5b92c8"/></svg></button>
            <button class="running" aria-label="Chrome"><svg viewBox="0 0 24 24"><circle cx="12" cy="12" r="11" fill="#fbc116"/><path d="M12 12L2.500 6.500a11 11 0 0 1 19 0H12z" fill="#ea4335"/><path d="M12 12L2.500 6.500A11 11 0 0 0 11 23l5-8.500z" fill="#34a853"/><circle cx="12" cy="12" r="5.500" fill="#fff"/><circle cx="12" cy="12" r="4.300" fill="#4285f4"/></svg></button>
            <button aria-label="Kristall"><svg viewBox="0 0 24 24"><path d="M11 1l11 5v11l-9 6-11-6V7z" fill="#8d90ab"/><path d="M11 1l11 5-5 10z" fill="#b08a94"/><path d="M22 6v11l-9 6 4-7z" fill="#a93a24"/><path d="M2 17l15-1-4 7z" fill="#70343c"/><path d="M11 1L6 16 2 7z" fill="#b7bad0"/></svg></button>
            <button aria-label="Cura"><svg viewBox="0 0 24 24"><path d="M8 1h16v17l-7 6H0V8z" fill="#18a9e6"/><path d="M17 7h-4q-5 0-5 5t5 5h4" fill="none" stroke="#fff" stroke-width="3.600"/></svg></button>
            <button class="running" aria-label="QF 2022"><svg viewBox="0 0 24 24"><path d="M1 3h12v14H1zM1 10h12M7 3v14" fill="none" stroke="#778"/><ellipse cx="8" cy="8" rx="6" ry="7" fill="none" stroke="#fff" stroke-width="2.500"/><path d="M8 11l7 6" stroke="#fff" stroke-width="2"/><path d="M15 17V5q0-4 8-4v4q-3 0-3 3v9z" fill="#dc3a2c"/><path d="M6 18h18v6H6z" fill="#c02a22"/><text x="15" y="24" class="tiny">2022</text></svg></button>
            <button class="running current" aria-label="Inventor"><svg viewBox="0 0 24 24"><path d="M0 0h24v24H0z" fill="#f9dcc0"/><path d="M7 2h10v3h-2v10h2v3H7v-3h2V5H7z" fill="#c0670f"/><path d="M13 19h9v3h-9z" fill="#e08c3a"/></svg></button>
            <button aria-label="Explorer"><svg><use href="#t-explorer"/></svg></button>
            <button aria-label="exScan"><svg viewBox="0 0 24 24"><circle cx="12" cy="12" r="11" fill="#3c6480"/><path d="M12 1a11 11 0 0 1 10 8l-10 3z" fill="#16222c"/><text x="12" y="15" class="tiny">exScan</text></svg></button>
            <button aria-label="Scanner"><svg viewBox="0 0 24 24"><path d="M9 2l9-1 3 2v14l-5 5-7-3z" fill="#b9bcbd"/><path d="M10 4h6v7h-6z" fill="#333"/><path d="M1 14l9-1v9l-8 1z" fill="#dcdedf"/><path d="M12 7h2v2h-2z" fill="#3c6"/></svg></button>
            <button aria-label="Fenster"><svg viewBox="0 0 24 24"><path d="M1 3h22v18H1z" fill="#e9eef1"/><path d="M1 3h22v3H1z" fill="#a9b2b8"/><path d="M7 7h8v11H7z" fill="#1a7fe0"/><path d="M17 8h4M17 11h4M17 14h4M3 8h2M3 11h2" stroke="#889"/></svg></button>
            <button aria-label="Omega"><svg viewBox="0 0 24 24"><path d="M0 0h24v24H0z" fill="#0b1646"/><ellipse cx="12" cy="10" rx="6.500" ry="7.500" fill="none" stroke="#fff" stroke-width="3.500"/><path d="M3 18h6v3H3zM15 18h6v3h-6z" fill="#fff"/></svg></button>
            <button class="letter" aria-label="Editor"><span>E</span></button>
            <button class="running multi" aria-label="Explorer"><svg><use href="#t-explorer"/></svg></button>
        </div>
        <span class="spacer"></span>
        <div class="tray">
            <button class="weather"><svg viewBox="0 0 24 24"><circle cx="16" cy="8" r="6" fill="#f9a51a"/><path d="M5 21a5 5 0 0 1 0-9 7 7 0 0 1 12-1 5 5 0 0 1 2 10z" fill="#d8e8fa"/></svg><span>21°C</span><span>Teilw. sonnig</span></button>
            <button aria-label="Mehr"><svg viewBox="0 0 16 16"><path d="M2 11l6-6 6 6" fill="none" stroke="#eee" stroke-width="1.400"/></svg></button>
            <button aria-label="Kamera"><svg viewBox="0 0 16 16"><path d="M3 5h7v7H3zM10 7l3-2v6l-3-2M4 1q4-2 7 0M4 15q4 2 7 0" fill="none" stroke="#eee" stroke-width="1.200"/></svg></button>
            <button aria-label="Satellit"><svg viewBox="0 0 16 16"><path d="M1 1q10-1 13 13Q3 14 1 1z" fill="#111" stroke="#777"/><path d="M7 8l6 7H7z" fill="#eee"/><circle cx="7" cy="8" r="2" fill="#ddd"/></svg></button>
            <button aria-label="Flugmodus"><svg viewBox="0 0 16 16"><path d="M1 7h4L4 1h2l4 6h4q2 1 0 2h-4l-4 6H4l1-6H1L0 11V5z" fill="none" stroke="#eee" stroke-width="1.200"/></svg></button>
            <button aria-label="Monitor"><svg viewBox="0 0 16 16"><path d="M1 0h14v12H1z" fill="#c6c6c6" stroke="#1a2796"/><path d="M1 12h14v4H1z" fill="#1a2796"/><path d="M2 14h5M9 14h5" stroke="#eee"/></svg></button>
            <button aria-label="Akku"><svg viewBox="0 0 16 16"><path d="M5 5h9v8H3V9M14 7h2v4h-2" fill="none" stroke="#eee" stroke-width="1.200"/><path d="M6 7h4v4H6z" fill="#eee"/><path d="M0 2h5v3q-3 3-5 0zM1 0v2M4 0v2" fill="none" stroke="#eee"/></svg></button>
            <button aria-label="Lautstärke"><svg viewBox="0 0 16 16"><path d="M0 6h2l4-4v12l-4-4H0z" fill="none" stroke="#eee"/><path d="M8 6q2 2 0 4M10 4q4 4 0 8" fill="none" stroke="#eee"/><path d="M12 2q6 6 0 12" fill="none" stroke="#889"/></svg></button>
            <button class="clock"><span>19:08</span><span>04.06.2022</span></button>
            <button class="notify" aria-label="Benachrichtigungen"><svg viewBox="0 0 16 16"><path d="M1 1h14v11h-5l-2 3-2-3H1z" fill="none" stroke="#eee" stroke-width="1.200"/></svg></button>
        </div>
    </div>
</body>
</html>
```
FILE: styles.css
```css
* {
    box-sizing: border-box;
}
body {
    margin: 0;
    height: 100vh;
    display: flex;
    flex-direction: column;
    overflow: hidden;
    font-family: Roboto, "Open Sans", sans-serif;
    font-size: 12px;
    line-height: 15px;
    color: #333;
    background-color: #d9d9d9;
}
button {
    font: inherit;
    color: inherit;
    background: none;
    border: none;
    padding: 0;
    cursor: pointer;
}
a {
    color: inherit;
    text-decoration: none;
}
svg {
    display: block;
    flex: none;
    width: 16px;
    height: 16px;
    overflow: visible;
}
.defs {
    position: absolute;
    width: 0;
    height: 0;
}
.spacer {
    flex: 1;
}
.app {
    flex: 1;
    display: flex;
    flex-direction: column;
    min-height: 0;
}

/* Titelleiste */
.titlebar {
    display: grid;
    grid-template-columns: 913px auto 1fr auto auto;
    height: 28px;
}
.quick-access, .infocenter, .window-buttons {
    display: flex;
    align-items: center;
    height: 22px;
}
.logo {
    width: 24px;
    height: 16px;
    margin: 0 3px 0 2px;
}
.qa {
    display: flex;
    align-items: center;
    justify-content: center;
    width: 24px;
    height: 22px;
}
.fx {
    font: italic 19px/22px "Liberation Serif", serif;
    color: #555;
}
.drop {
    display: flex;
    align-items: center;
    justify-content: center;
    flex: none;
    width: 12px;
    height: 12px;
}
.drop::before, .caret, .more::after, .with-drop::after {
    content: "";
    border: 3px solid transparent;
    border-top: 4px solid #444;
    border-bottom: 0;
}
.titlebar .drop::before, .navbar .drop::before {
    border-top: 3px solid #666;
}
.titlebar .line {
    flex-direction: column-reverse;
    gap: 2px;
    width: 16px;
}
.titlebar .line::before {
    border-width: 4px;
    border-bottom: 0;
}
.titlebar .line::after {
    content: "";
    width: 8px;
    height: 1px;
    background-color: #555;
}
.combo {
    position: relative;
    display: flex;
    align-items: center;
    width: 100px;
    height: 22px;
    padding-left: 3px;
    background-color: #f5f5f5;
}
.combo.swatch select {
    padding: 0 2px;
}
.combo select {
    flex: 1;
    min-width: 0;
    height: 22px;
    padding: 0 4px;
    border: none;
    appearance: none;
    background: none;
    font: inherit;
    color: #333;
}
.combo::after {
    content: "";
    position: absolute;
    right: 3px;
    top: 9px;
    border: 4px solid transparent;
    border-top: 5px solid #444;
    border-bottom: 0;
    pointer-events: none;
}
.app-title {
    display: flex;
    gap: 8px;
    padding-top: 5px;
}
.infocenter {
    grid-column: 4;
}
.play {
    margin-right: 6px;
    border: 4px solid transparent;
    border-left: 5px solid #666;
    border-right: 0;
}
.infocenter input {
    width: 180px;
    height: 20px;
    padding: 0 5px;
    border: none;
    background-color: #f5f5f5;
    font: inherit;
    color: #333;
}
.user {
    display: flex;
    align-items: center;
    gap: 5px;
    width: 106px;
    padding-left: 4px;
}
.infocenter .cart {
    width: 34px;
    height: 20px;
    margin-right: 7px;
    padding-right: 4px;
    border-right: 1px solid #bbb;
}
.help {
    width: 18px;
    height: 18px;
    border: 2px solid #444;
    border-radius: 50%;
    background-color: #fff;
    color: #2d4fa8;
    font-weight: bold;
    line-height: 14px;
}
.infocenter .help + .drop {
    width: 20px;
}
.window-buttons {
    gap: 13px;
    padding: 0 7px 0 39px;
    color: #333;
}
.window-buttons svg, .doc-buttons svg {
    width: 12px;
    height: 12px;
}

/* Registerkarten */
.ribbon-tabs {
    display: flex;
    align-items: center;
    height: 20px;
    padding-left: 1px;
    color: #666;
}
.ribbon-tabs a {
    height: 20px;
    padding: 3px 9px 0 10px;
    white-space: nowrap;
}
.ribbon-tabs .file {
    width: 45px;
    margin-right: 3px;
    padding: 3px 0 0;
    text-align: center;
    background-color: #fba01c;
    color: #fff;
}
.ribbon-tabs .active {
    width: 74px;
    padding: 3px 0 0;
    text-align: center;
    background-color: #f5f5f5;
    color: #333;
}
.collapse {
    display: flex;
    align-items: center;
    justify-content: center;
    width: 15px;
    height: 9px;
    margin: 2px 2px 0 22px;
    border: 1px solid #444;
    border-radius: 2px;
    background-color: #fff;
}
.collapse span {
    border: 3px solid transparent;
    border-bottom: 3px solid #333;
    border-top: 0;
}

/* Multifunktionsleiste */
.ribbon {
    display: flex;
    height: 96px;
    background-color: #f5f5f5;
    border-bottom: 1px solid #c4c4c4;
}
.panel {
    display: flex;
    flex-direction: column;
    flex: none;
    height: 93px;
    border-right: 1px solid #d8d8d8;
}
.panel h2 {
    display: flex;
    align-items: center;
    justify-content: center;
    gap: 6px;
    margin: 0;
    font-size: 12px;
    font-weight: normal;
    line-height: 16px;
}
.panel h2 .caret {
    border-width: 4px;
    border-bottom: 0;
}
.tools {
    display: flex;
    flex: 1;
}
.big {
    display: flex;
    flex-direction: column;
    align-items: center;
    flex: none;
    width: 62px;
    height: 76px;
    padding-top: 5px;
    text-align: center;
}
.big svg {
    width: 32px;
    height: 32px;
    margin-bottom: 5px;
}
.big.more::after {
    margin-top: 2px;
}
.low {
    margin-top: 52px;
}
.stack {
    display: flex;
    flex-direction: column;
    padding-top: 3px;
}
.stack button {
    display: flex;
    align-items: center;
    gap: 5px;
    height: 24px;
    white-space: nowrap;
}
.with-drop::after {
    margin-left: auto;
}
.w24 { width: 24px; }
.w75 { width: 75px; }
.w82 { width: 82px; }
.w92 { width: 92px; }
.w134 { width: 134px; }
.w137 { width: 137px; }
.p-skizze { width: 80px; }
.p-skizze .big { margin-left: 9px; width: 60px; }
.p-skizze .low { width: 8px; }
.p-erstellen { width: 361px; }
.p-erstellen .big { width: 55px; }
.p-erstellen .stack:nth-child(3) { margin-left: 3px; }
.p-aendern { width: 504px; }
.p-aendern .big { width: 58px; }
.p-aendern .more { margin-left: 4px; }
.p-aendern .stack:nth-child(3) { margin-left: 10px; }
.p-untersuchen { width: 77px; }
.p-untersuchen .big { width: 76px; }
.p-arbeit { width: 134px; }
.p-arbeit .stack { width: 66px; }
.p-muster { width: 56px; }
.p-muster .tools { padding-left: 8px; }
.p-freiform { width: 164px; }
.p-freiform .big { width: 65px; }
.p-freiform .stack { margin-left: 3px; }
.p-oberflaeche { width: 345px; }
.p-oberflaeche .tools { padding-left: 7px; }
.p-simulation { width: 73px; }
.p-simulation .big { width: 72px; }
.p-konvertieren { width: 78px; }
.p-konvertieren .big { width: 77px; }
.ribbon-end {
    display: flex;
    align-items: center;
    gap: 3px;
    height: 30px;
    padding-left: 7px;
}
.round {
    display: flex;
    align-items: center;
    justify-content: center;
    width: 16px;
    height: 16px;
    border: 1px solid #555;
    border-radius: 50%;
}

/* Browser */
.workspace {
    flex: 1;
    display: flex;
    min-height: 0;
}
.browser {
    width: 250px;
    flex: none;
    background-color: #f5f5f5;
    border-right: 1px solid #b5b9c0;
    font-family: Lato, sans-serif;
    color: #1c1c1c;
}
.browser-tabs {
    display: flex;
    align-items: center;
    height: 24px;
    padding-right: 1px;
    background-color: #d9d9d9;
}
.browser-tab {
    height: 24px;
    padding: 0 4px;
    color: #888;
}
.browser-tab.active {
    display: flex;
    align-items: center;
    justify-content: space-between;
    width: 67px;
    padding-right: 7px;
    background-color: #f5f5f5;
    color: #333;
}
.browser-tab svg, .add svg {
    width: 10px;
    height: 10px;
    color: #555;
}
.add {
    padding-left: 7px;
}
.tool {
    display: flex;
    justify-content: center;
    width: 25px;
    color: #555;
}
.tree-root {
    display: flex;
    align-items: center;
    gap: 3px;
    height: 20px;
    padding-left: 2px;
}
.tree {
    margin: 0;
    padding: 0;
    list-style: none;
}
.tree li {
    position: relative;
    display: flex;
    align-items: center;
    height: 20px;
}
.tree i {
    position: relative;
    width: 18px;
    height: 20px;
    flex: none;
}
.tree i::before {
    content: "";
    position: absolute;
    left: 8px;
    top: 0;
    width: 8px;
    height: 10px;
    border-left: 1px dotted #999;
    border-bottom: 1px dotted #999;
}
.tree li:not(:last-child) i::after {
    content: "";
    position: absolute;
    left: 8px;
    top: 10px;
    height: 10px;
    border-left: 1px dotted #999;
}
.tree li.open::before {
    content: "";
    position: absolute;
    z-index: 1;
    left: 4px;
    top: 6px;
    width: 8px;
    height: 8px;
    background:
        linear-gradient(#888, #888) 50% 50% / 8px 2px no-repeat,
        linear-gradient(#888, #888) 50% 50% / 2px 8px no-repeat;
}
.tree span {
    margin-left: 2px;
    padding: 0 1px;
    line-height: 16px;
}
.tree .off {
    color: #808080;
}
.tree .selected span {
    box-shadow: 0 0 0 1px #2a94cf;
}
.tree .cursor {
    position: absolute;
    z-index: 2;
    left: 103px;
    top: 0;
    width: 20px;
    height: 30px;
}

/* Dokumentbereich */
.document {
    flex: 1;
    display: flex;
    flex-direction: column;
    min-width: 0;
}
.viewport {
    position: relative;
    flex: 1;
    background:
        linear-gradient(rgba(140, 156, 186, 0) 80%, rgba(140, 156, 186, 0.45) 100%),
        radial-gradient(ellipse 62% 88% at 50% 76%, #dce7f9 0%, #d5e0f2 25%, #bccadf 60%, #a9b8d0 85%, #9aaac3 100%);
}
.doc-buttons {
    position: absolute;
    right: 1px;
    top: 6px;
    display: flex;
    gap: 9px;
    color: #444;
}
.part {
    position: absolute;
    left: calc(50% - 245px);
    top: calc(50% - 238px);
    width: 520px;
    height: 520px;
}
.viewcube {
    position: absolute;
    right: 26px;
    top: 48px;
    width: 74px;
    height: 70px;
}
.viewcube text {
    font: bold 32px "Open Sans", sans-serif;
    fill: #6f7a8b;
}
.viewcube .side {
    font-size: 16px;
}
.navbar {
    position: absolute;
    right: 1px;
    top: 145px;
    display: flex;
    flex-direction: column;
    align-items: center;
    width: 35px;
    border: 2px solid #8491a6;
    border-radius: 5px;
    background-color: #b3c0d3;
}
.nav-x {
    align-self: flex-end;
    margin: 0 2px 5px 0;
}
.nav-x:last-child {
    margin-top: 6px;
    margin-bottom: 2px;
}
.nav-x svg {
    width: 10px;
    height: 10px;
}
.nav {
    margin: 6px 0 4px;
}
.nav svg {
    width: 22px;
    height: 22px;
}
.navbar .drop {
    height: 10px;
}
.navbar hr {
    width: 25px;
    margin: 1px 0 0;
    border: none;
    border-top: 1px solid #8491a6;
}
.triad {
    position: absolute;
    left: 30px;
    bottom: 45px;
    width: 60px;
    height: 46px;
}
.triad text {
    font-size: 11px;
}
.doc-tabs {
    display: flex;
    align-items: center;
    height: 24px;
    background-color: #d9d9d9;
}
.home, .menu {
    display: flex;
    align-items: center;
    justify-content: center;
    width: 28px;
    height: 24px;
}
.menu {
    width: 24px;
}
.doc-tab {
    display: flex;
    align-items: center;
    justify-content: space-between;
    width: 121px;
    height: 24px;
    padding: 1px 7px 0 8px;
    background-color: #eee;
    border-bottom: 3px solid #35a7dd;
    color: #2590d2;
}
.doc-tab svg {
    width: 9px;
    height: 9px;
    color: #777;
}
.statusbar {
    display: flex;
    align-items: center;
    height: 24px;
    background-color: #eee;
}
.status {
    flex: 1;
    padding: 1px 0 0 1px;
}
.count {
    width: 39px;
    height: 22px;
    padding: 3px 0 0 7px;
    border-left: 1px solid #ccc;
    color: #7a1f8a;
}

/* Taskleiste */
.taskbar {
    display: flex;
    height: 40px;
    background-color: #203034;
    color: #f2f2f2;
}
.start {
    display: flex;
    align-items: center;
    justify-content: center;
    width: 48px;
}
.search {
    display: flex;
    align-items: center;
    width: 344px;
    padding: 0 15px 0 12px;
    border: 1px solid #bbb;
    background-color: #f2f2f2;
}
.search input {
    flex: 1;
    min-width: 0;
    padding: 1px 0 0 11px;
    border: none;
    background: none;
    font-family: inherit;
    font-size: 15px;
}
.search input::placeholder {
    color: #222;
    opacity: 1;
}
.search .art {
    width: 48px;
    height: 32px;
}
.apps {
    display: flex;
    gap: 1px;
    margin-left: 2px;
}
.apps button {
    display: flex;
    align-items: center;
    justify-content: center;
    width: 48px;
    height: 40px;
}
.apps svg {
    width: 24px;
    height: 24px;
}
.apps .small {
    width: 16px;
    height: 16px;
}
.apps text {
    font-size: 10px;
    font-weight: bold;
    fill: #fff;
    text-anchor: middle;
}
.apps .tiny {
    font-size: 7px;
}
.apps .letter {
    font: italic bold 26px/38px "Liberation Serif", serif;
    color: #5d8be8;
}
.apps .running {
    background: linear-gradient(#76b9ed, #76b9ed) 50% 100% / 40px 2px no-repeat;
}
.apps .current {
    background: linear-gradient(#76b9ed, #76b9ed) 50% 100% / 48px 2px no-repeat #4d5a5e;
}
.tray {
    display: flex;
    align-items: center;
    padding-right: 4px;
}
.tray button {
    display: flex;
    align-items: center;
    justify-content: center;
    width: 24px;
    height: 40px;
}
.tray .weather {
    width: auto;
    gap: 9px;
    padding: 2px 10px 0 0;
    font-size: 14px;
}
.weather svg {
    width: 24px;
    height: 24px;
}
.tray .clock {
    flex-direction: column;
    gap: 4px;
    width: 64px;
}
.tray .notify {
    width: 50px;
    padding-right: 7px;
    border-right: 1px solid #66757a;
}
```
